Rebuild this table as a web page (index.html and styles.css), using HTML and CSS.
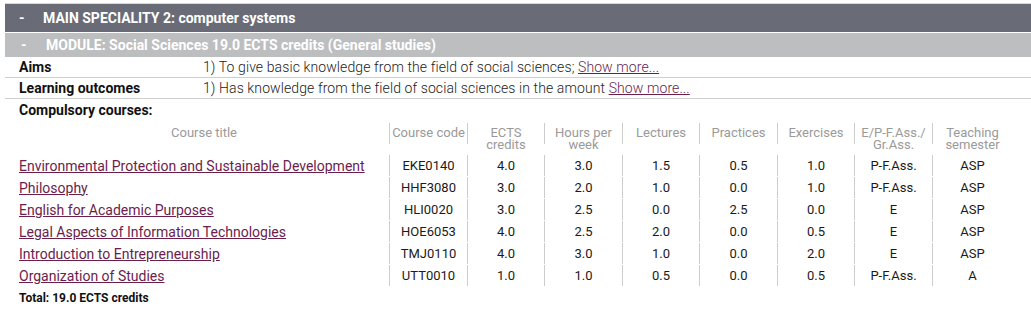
FILE: index.html
```html
<!DOCTYPE html>
<html lang="en">
<head>
<meta charset="utf-8">
<title>Main speciality 2</title>
<link rel="stylesheet" href="styles.css">
</head>
<body>
<div class="wrap">
  <div class="spec-bar"><span class="dash">-</span><span>MAIN SPECIALITY 2: computer systems</span></div>
  <div class="module-bar"><span class="dash">-</span><span>MODULE: Social Sciences 19.0 ECTS credits (General studies)</span></div>
  <div class="info-row">
    <div class="info-label">Aims</div>
    <div class="info-value">1) To give basic knowledge from the field of social sciences; <a href="#">Show more...</a></div>
  </div>
  <div class="info-row">
    <div class="info-label">Learning outcomes</div>
    <div class="info-value">1) Has knowledge from the field of social sciences in the amount <a href="#">Show more...</a></div>
  </div>
  <div class="section-title">Compulsory courses:</div>
  <div class="courses head">
    <div class="th first">Course title</div>
    <div class="th">Course code</div>
    <div class="th">ECTS<br>credits</div>
    <div class="th">Hours per<br>week</div>
    <div class="th">Lectures</div>
    <div class="th">Practices</div>
    <div class="th">Exercises</div>
    <div class="th">E/P-F.Ass./<br>Gr.Ass.</div>
    <div class="th">Teaching<br>semester</div>
  </div>
  <div class="courses body">
    <div class="td first"><a href="#">Environmental Protection and Sustainable Development</a></div>
    <div class="td">EKE0140</div><div class="td">4.0</div><div class="td">3.0</div><div class="td">1.5</div><div class="td">0.5</div><div class="td">1.0</div><div class="td">P-F.Ass.</div><div class="td">ASP</div>

    <div class="td first"><a href="#">Philosophy</a></div>
    <div class="td">HHF3080</div><div class="td">3.0</div><div class="td">2.0</div><div class="td">1.0</div><div class="td">0.0</div><div class="td">1.0</div><div class="td">P-F.Ass.</div><div class="td">ASP</div>

    <div class="td first"><a href="#">English for Academic Purposes</a></div>
    <div class="td">HLI0020</div><div class="td">3.0</div><div class="td">2.5</div><div class="td">0.0</div><div class="td">2.5</div><div class="td">0.0</div><div class="td">E</div><div class="td">ASP</div>

    <div class="td first"><a href="#">Legal Aspects of Information Technologies</a></div>
    <div class="td">HOE6053</div><div class="td">4.0</div><div class="td">2.5</div><div class="td">2.0</div><div class="td">0.0</div><div class="td">0.5</div><div class="td">E</div><div class="td">ASP</div>

    <div class="td first"><a href="#">Introduction to Entrepreneurship</a></div>
    <div class="td">TMJ0110</div><div class="td">4.0</div><div class="td">3.0</div><div class="td">1.0</div><div class="td">0.0</div><div class="td">2.0</div><div class="td">E</div><div class="td">ASP</div>

    <div class="td first"><a href="#">Organization of Studies</a></div>
    <div class="td">UTT0010</div><div class="td">1.0</div><div class="td">1.0</div><div class="td">0.5</div><div class="td">0.0</div><div class="td">0.5</div><div class="td">P-F.Ass.</div><div class="td">A</div>
  </div>
  <div class="total">Total: 19.0 ECTS credits</div>
</div>
</body>
</html>
```
FILE: styles.css
```css
html, body {
  margin: 0;
  padding: 0;
  background: #fff;
}
body {
  font-family: Roboto, "Liberation Sans", Arial, sans-serif;
  color: #222;
}
.wrap {
  margin-left: 5px;
  padding-top: 3px;
}
.spec-bar {
  display: flex;
  align-items: center;
  height: 28px;
  border-top: 1px solid #d8d8d8;
  background: #696c77;
  color: #fff;
  font-weight: 700;
  font-size: 14px;
  padding-left: 14px;
}
.spec-bar .dash { width: 24px; }
.module-bar {
  display: flex;
  align-items: center;
  height: 24px;
  margin-top: 1px;
  background: #bdbebf;
  color: #fff;
  font-weight: 700;
  font-size: 14px;
  padding-left: 16px;
}
.module-bar .dash { width: 25px; }
.info-row {
  display: grid;
  grid-template-columns: 184px 1fr;
  align-items: center;
  height: 20px;
  border-bottom: 1px solid #cfcfcf;
  padding-left: 14px;
  font-size: 14px;
}
.info-label { font-weight: 700; color: #111; }
.info-value { font-weight: 300; color: #222; letter-spacing: 0.1px; }
a { color: #6b1d4e; text-decoration: underline; }
.section-title {
  padding-left: 14px;
  margin-top: 2px;
  font-size: 14px;
  font-weight: 700;
  color: #111;
  height: 19px;
  line-height: 19px;
}
.courses {
  display: grid;
  grid-template-columns: 370px 78px 77px 78px 77px 78px 77px 78px 80px;
  margin-left: 14px;
}
.courses.head {
  margin-top: 3px;
  height: 32px;
  align-items: start;
}
.courses.body {
  grid-auto-rows: 21px;
  row-gap: 1px;
}
.th {
  color: #9a9a9a;
  font-size: 13px;
  line-height: 12px;
  text-align: center;
  padding-top: 4px;
  border-left: 1px solid #cccccc;
  box-sizing: border-box;
  height: 21px;
  white-space: nowrap;
}
.td {
  font-size: 13px;
  border-left: 1px solid #cccccc;
  display: flex;
  align-items: center;
  justify-content: center;
  color: #1a1a1a;
}
.courses .first { border-left: none; }
.td.first {
  justify-content: flex-start;
  font-size: 14px;
}
.total {
  padding-left: 14px;
  margin-top: 5px;
  font-size: 12px;
  font-weight: 700;
  color: #111;
}
```
